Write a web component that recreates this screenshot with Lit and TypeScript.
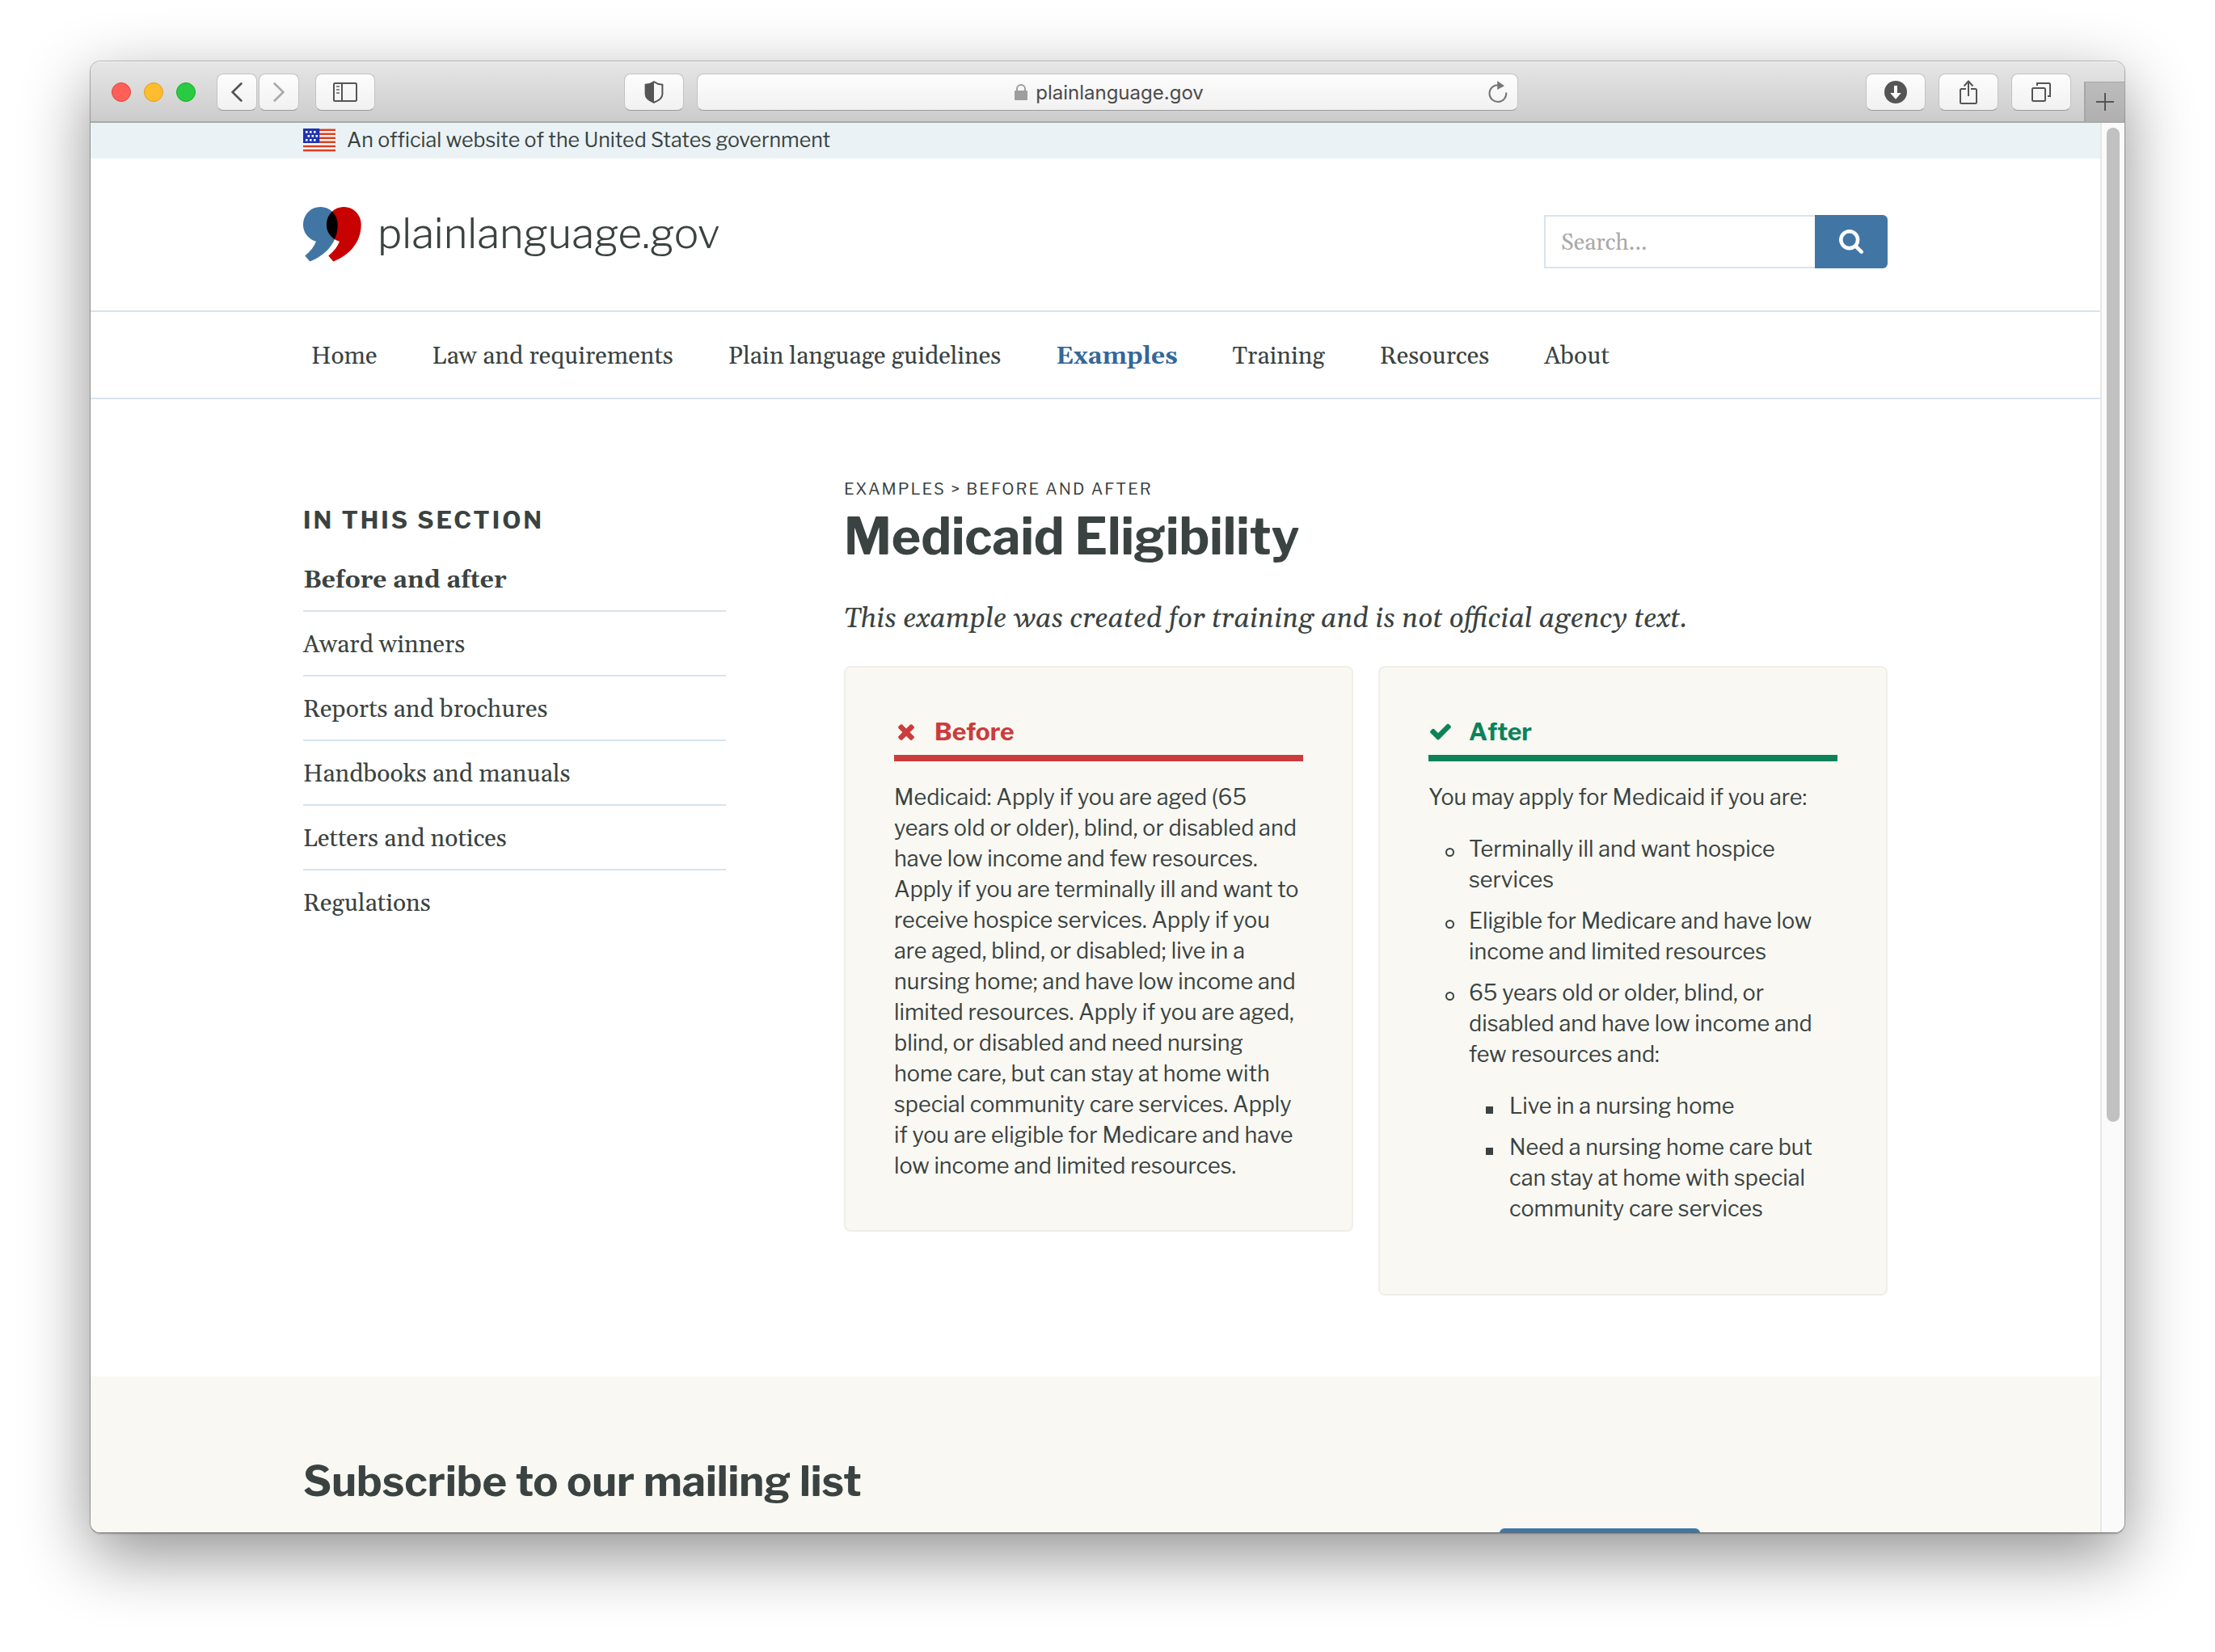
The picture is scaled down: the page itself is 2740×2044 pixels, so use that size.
import { LitElement, html, svg, css } from "lit";
import { customElement, property } from "lit/decorators.js";

const reset = css`
  :host, *, *::before, *::after { box-sizing: border-box; }
  h1, h2, p, ul { margin: 0; padding: 0; }
  ul { list-style: none; }
  a { color: inherit; text-decoration: none; }
  button { font: inherit; padding: 0; margin: 0; border: 0; }
  svg { display: block; flex: none; }
`;

const searchIcon = svg`<svg width="30" height="30" viewBox="0 128 1664 1664" fill="#fff" aria-hidden="true"><path d="M1152 832q0-185-131.5-316.5t-316.5-131.5-316.5 131.5-131.5 316.5 131.5 316.5 316.5 131.5 316.5-131.5 131.5-316.5zm512 832q0 52-38 90t-90 38q-54 0-90-38l-343-342q-179 124-399 124-143 0-273.5-55.5t-225-150-150-225-55.5-273.5 55.5-273.5 150-225 225-150 273.5-55.5 273.5 55.5 225 150 150 225 55.5 273.5q0 220-124 399l343 343q37 37 37 90z"/></svg>`;

const timesIcon = svg`<svg width="30" height="30" viewBox="0 0 1792 1792" fill="currentColor" aria-hidden="true"><path d="M1490 1322q0 40-28 68l-136 136q-28 28-68 28t-68-28l-294-294-294 294q-28 28-68 28t-68-28l-136-136q-28-28-28-68t28-68l294-294-294-294q-28-28-28-68t28-68l136-136q28-28 68-28t68 28l294 294 294-294q28-28 68-28t68 28l136 136q28 28 28 68t-28 68l-294 294 294 294q28 28 28 68z"/></svg>`;

const checkIcon = svg`<svg width="30" height="30" viewBox="0 0 1792 1792" fill="currentColor" aria-hidden="true"><path d="M1671 566q0 40-28 68l-724 724-136 136q-28 28-68 28t-68-28l-136-136-362-362q-28-28-28-68t28-68l136-136q28-28 68-28t68 28l294 295 656-657q28-28 68-28t68 28l136 136q28 28 28 68z"/></svg>`;

const comma = "M21.3 0A21.3 21.3 0 0 1 42.7 21.3C43 43 29 59.5 8.3 67.6L2.3 60.4C9 55 13.5 49 16 42.7A21.3 21.3 0 0 1 0 21.3A21.3 21.3 0 0 1 21.3 0Z";

const logoMark = svg`<svg width="72" height="68" viewBox="0 0 72 68" aria-hidden="true">
  <clipPath id="first"><path d="${comma}"/></clipPath>
  <path fill="#4176a4" d="${comma}"/>
  <path fill="#c70000" transform="translate(29 0)" d="${comma}"/>
  <g clip-path="url(#first)"><path transform="translate(29 0)" d="${comma}"/></g>
</svg>`;

const stars = [[3, 3], [8, 3], [13, 3], [5.5, 8], [10.5, 8], [15.5, 8], [3, 13], [8, 13], [13, 13]];

const flag = svg`<svg width="40" height="29" viewBox="0 0 40 29" role="img" aria-label="U.S. flag">
  <rect width="40" height="29" fill="#fff"/>
  ${[0.5, 5.5, 10.5, 15.5, 20.7, 25.8].map((y) => svg`<rect y="${y}" width="40" height="2.6" fill="#dc3f21"/>`)}
  <rect width="20.3" height="18" fill="#1e33b1"/>
  ${stars.map(([x, y]) => svg`<rect x="${x}" y="${y}" width="2.6" height="2.6" fill="#fff"/>`)}
</svg>`;

@customElement("browser-toolbar")
export class BrowserToolbar extends LitElement {
  static styles = [reset, css`
    :host {
      display: grid;
      grid-template-columns: 660fr 1106fr 750fr;
      align-items: center;
      height: 76px;
      flex: none;
      border-top: 1px solid #f6f6f6;
      border-bottom: 2px solid #a9a9a9;
      background: linear-gradient(#e6e6e6, #cccccc);
      font-family: Inter, "Liberation Sans", sans-serif;
      font-weight: 400;
    }
    .group { display: flex; align-items: center; gap: 16px; }
    .left { padding-left: 26px; gap: 20px; }
    .lights { display: flex; gap: 16px; padding-right: 6px; }
    .light { width: 24px; height: 24px; border-radius: 50%; border: 1px solid #e0443e; background: #ff5f57; }
    .light.min { border-color: #dea123; background: #febc2e; }
    .light.max { border-color: #14ae28; background: #28cb41; }
    .pair { display: flex; gap: 2px; }
    .btn, .address {
      display: flex;
      align-items: center;
      justify-content: center;
      height: 46px;
      border: 1px solid #c2c2c2;
      border-bottom-color: #9c9c9c;
      border-radius: 8px;
      background: linear-gradient(#fdfdfd, #f1f1f1);
    }
    .btn { width: 74px; }
    .btn.slim { width: 50px; }
    .address { flex: 1; padding-right: 12px; }
    .url { flex: 1; display: flex; justify-content: center; align-items: center; gap: 10px; padding-left: 40px; font-size: 24px; line-height: 30px; color: #4b4b4b; }
    .url span { padding-top: 2px; }
    .reload { background: none; }
    .right { justify-content: flex-end; height: 100%; }
    .tab {
      display: flex;
      align-items: center;
      justify-content: center;
      align-self: flex-end;
      width: 50px;
      height: 49px;
      border-top: 1px solid #a6a6a6;
      border-left: 2px solid #a6a6a6;
      background: linear-gradient(#bcbcbc, #b0b0b0);
    }
  `];

  render() {
    return html`
      <div class="group left">
        <div class="lights">
          <button class="light" aria-label="Close"></button>
          <button class="light min" aria-label="Minimize"></button>
          <button class="light max" aria-label="Zoom"></button>
        </div>
        <div class="pair">
          <button class="btn slim" aria-label="Back"><svg width="14" height="24" viewBox="0 0 14 24" fill="none" stroke="#555" stroke-width="2.7" stroke-linecap="round"><path d="M12.3 1.5 1.6 12 12.3 22.5"/></svg></button>
          <button class="btn slim" aria-label="Forward"><svg width="14" height="24" viewBox="0 0 14 24" fill="none" stroke="#aaa" stroke-width="2.7" stroke-linecap="round"><path d="M1.7 1.5 12.4 12 1.7 22.5"/></svg></button>
        </div>
        <button class="btn" aria-label="Sidebar"><svg width="30" height="24" viewBox="0 0 30 24" fill="none" stroke="#555" stroke-width="2"><rect x="1" y="1" width="28" height="22" rx="1.5"/><path d="M11 1v22"/><path stroke="#888" d="M4 5h4M4 9h4M4 13h4"/></svg></button>
      </div>
      <div class="group">
        <button class="btn" aria-label="Privacy report"><svg width="24" height="28" viewBox="0 0 24 28"><path d="M12 1.2C9 3.4 5.5 4.4 1.6 4.8V16.5C1.6 21.5 6 24.4 12 26.8C18 24.4 22.4 21.5 22.4 16.5V4.8C18.5 4.4 15 3.4 12 1.2Z" fill="none" stroke="#555" stroke-width="2"/><path d="M12 1.2C9 3.4 5.5 4.4 1.6 4.8V16.5C1.6 21.5 6 24.4 12 26.8Z" fill="#555"/></svg></button>
        <div class="address">
          <div class="url">
            <svg width="16" height="20" viewBox="0 0 16 20"><rect y="8" width="16" height="12" rx="1" fill="#9e9e9e"/><path d="M3 9V6a5 5 0 0 1 10 0v3" fill="none" stroke="#9e9e9e" stroke-width="2"/></svg>
            <span>plainlanguage.gov</span>
          </div>
          <button class="reload" aria-label="Reload"><svg width="24" height="28" viewBox="0 0 24 28"><path d="M12 5.2A10.4 10.4 0 1 0 22.2 14.5" fill="none" stroke="#777" stroke-width="2"/><path d="M11.2 0 20 6.2 11.2 11Z" fill="#777"/></svg></button>
        </div>
      </div>
      <div class="group right">
        <button class="btn" aria-label="Downloads"><svg width="28" height="28" viewBox="0 0 28 28"><circle cx="14" cy="14" r="14" fill="#555"/><path d="M12 6h4v9h4.8L14 22.8 7.2 15H12Z" fill="#fff"/></svg></button>
        <button class="btn" aria-label="Share"><svg width="22" height="30" viewBox="0 0 22 30" fill="none" stroke="#555" stroke-width="2"><path d="M8 11H2.5Q1 11 1 12.5V27.5Q1 29 2.5 29H19.5Q21 29 21 27.5V12.5Q21 11 19.5 11H14"/><path d="M11 20V1.5M5.5 7.5 11 1.5 16.5 7.5"/></svg></button>
        <button class="btn" aria-label="Tabs"><svg width="24" height="24" viewBox="0 0 24 24" fill="none" stroke="#555" stroke-width="2"><rect x="1" y="7" width="16" height="16" rx="1.5"/><path d="M7 4V1H21.5Q23 1 23 2.5V17H20"/></svg></button>
        <button class="tab" aria-label="New tab"><svg width="22" height="22" viewBox="0 0 22 22" stroke="#555" stroke-width="2"><path d="M11 0v22M0 11h22"/></svg></button>
      </div>`;
  }
}

@customElement("example-card")
export class ExampleCard extends LitElement {
  @property() kind = "before";
  @property() heading = "";

  static styles = [reset, css`
    :host { display: block; }
    .card {
      border: 2px solid #f0eee9;
      border-radius: 8px;
      background: #f9f8f3;
      padding: 60px;
      font-size: 27px;
      line-height: 38px;
    }
    .title {
      display: flex;
      align-items: center;
      gap: 20px;
      padding-bottom: 10px;
      margin-bottom: 26px;
      border-bottom: 8px solid currentColor;
      font-size: 30px;
      line-height: 38px;
      font-weight: 700;
    }
    .before { color: #cc3c3c; }
    .after { color: #0d8259; }
  `];

  render() {
    return html`<section class="card">
      <h2 class="title ${this.kind}">${this.kind === "before" ? timesIcon : checkIcon}${this.heading}</h2>
      <slot></slot>
    </section>`;
  }
}

const navItems = ["Home", "Law and requirements", "Plain language guidelines", "Examples", "Training", "Resources", "About"];
const sectionItems = ["Before and after", "Award winners", "Reports and brochures", "Handbooks and manuals", "Letters and notices", "Regulations"];

@customElement("app-root")
export class AppRoot extends LitElement {
  static styles = [reset, css`
    :host {
      --ink: #3a4341;
      --line: #d6e4ed;
      --serif: Gelasio, Georgia, "Liberation Serif", serif;
      --sans: "Libre Franklin", "Public Sans", "Open Sans", sans-serif;
      display: block;
      height: 100vh;
      padding: 76px 112px 148px;
      overflow: hidden;
      background: #fff;
      color: var(--ink);
      font-family: var(--sans);
      font-weight: 450;
    }
    .window {
      display: flex;
      flex-direction: column;
      height: 100%;
      overflow: hidden;
      border-radius: 12px;
      background: #fff;
      box-shadow: 0 0 0 1px rgba(0, 0, 0, 0.24), 0 2px 2px rgba(0, 0, 0, 0.2), 0 28px 84px rgba(0, 0, 0, 0.44);
    }
    .view { display: flex; flex: 1; min-height: 0; }
    .page { flex: 1; min-width: 0; overflow: hidden; }
    .track { width: 30px; flex: none; border-left: 2px solid #e7e7e7; background: #fafafa; padding: 6px; }
    .thumb { width: 16px; height: 71%; border-radius: 8px; background: #c1c1c1; }
    .wrap { width: 79%; max-width: 1960px; margin: 0 auto; }

    .banner { background: #eaf2f5; padding-bottom: 1px; font-size: 25px; line-height: 43px; }
    .banner .wrap { display: flex; align-items: center; gap: 14px; }

    .header { display: flex; align-items: center; justify-content: space-between; height: 188px; }
    .brand { display: flex; align-items: center; gap: 20px; font-size: 51px; line-height: 60px; font-weight: 350; }
    .brand span { padding-bottom: 2px; }
    .search { display: flex; margin-top: 18px; }
    .search input {
      width: 335px;
      height: 66px;
      padding: 3px 19px 0;
      border: 2px solid var(--line);
      border-right: 0;
      border-radius: 0;
      background: #fff;
      color: var(--ink);
      font-family: var(--serif);
      font-size: 28px;
    }
    .search input::placeholder { color: #a9a9a9; opacity: 1; }
    .search button {
      display: flex;
      align-items: center;
      justify-content: center;
      width: 90px;
      background: #4176a4;
      border-radius: 0 6px 6px 0;
    }

    .nav { border-top: 2px solid var(--line); border-bottom: 2px solid var(--line); font-family: var(--serif); font-size: 30px; line-height: 40px; }
    .nav ul { display: flex; align-items: center; gap: 68px; height: 106px; padding: 3px 0 0 10px; }
    .nav .on { font-weight: 700; color: #34679a; }

    .columns { display: grid; grid-template-columns: 523fr 1291fr; column-gap: 146px; padding-top: 99px; padding-bottom: 100px; }
    .aside { padding-top: 32px; }
    .aside h2 { font-size: 30px; line-height: 36px; letter-spacing: 3px; margin-bottom: 16px; text-transform: uppercase; }
    .aside li { padding: 22px 0 18px; border-bottom: 2px solid var(--line); font-family: var(--serif); font-size: 30px; line-height: 38px; }
    .aside li:first-child { font-weight: 700; }
    .aside li:last-child { border-bottom: 0; }

    .crumbs { font-size: 20px; line-height: 24px; letter-spacing: 2px; text-transform: uppercase; margin-bottom: 13px; }
    h1 { font-size: 62px; line-height: 68px; margin-bottom: 43px; }
    .lead { font-family: var(--serif); font-style: italic; font-size: 34px; line-height: 50px; margin-bottom: 33px; }
    .cards { display: grid; grid-template-columns: 1fr 1fr; align-items: start; gap: 31px; }

    .list { display: grid; gap: 13px; margin: 26px 0; padding-left: 21px; }
    .list .list { margin: 26px 0 0; }
    .list li { display: grid; grid-template-columns: 29px 1fr; }
    .list li::before { content: ""; width: 11px; height: 11px; margin-top: 17px; border: 2px solid var(--ink); border-radius: 50%; }
    .list .list li::before { width: 9px; height: 9px; margin-top: 19px; border-radius: 0; background: var(--ink); }

    .subscribe { background: #f9f8f3; padding-top: 100px; padding-bottom: 100px; }
    .subscribe h2 { font-size: 52px; line-height: 60px; margin-bottom: 28px; }
    .form { display: grid; grid-template-columns: 1480fr 248fr 232fr; }
    .form button { grid-column: 2; height: 72px; border-radius: 6px; background: #4176a4; }
  `];

  render() {
    return html`<div class="window">
      <browser-toolbar></browser-toolbar>
      <div class="view">
        <div class="page">
          <div class="banner"><div class="wrap">${flag}<span>An official website of the United States government</span></div></div>
          <header class="wrap header">
            <a class="brand" href="#">${logoMark}<span>plainlanguage.gov</span></a>
            <form class="search" role="search">
              <input type="search" aria-label="Search" placeholder="Search...">
              <button type="button" aria-label="Search">${searchIcon}</button>
            </form>
          </header>
          <nav class="nav"><ul class="wrap">
            ${navItems.map((t) => html`<li><a class=${t === "Examples" ? "on" : ""} href="#">${t}</a></li>`)}
          </ul></nav>
          <div class="wrap columns">
            <aside class="aside">
              <h2>In this section</h2>
              <ul>${sectionItems.map((t) => html`<li><a href="#">${t}</a></li>`)}</ul>
            </aside>
            <main>
              <p class="crumbs"><a href="#">Examples</a> &gt; <a href="#">Before and after</a></p>
              <h1>Medicaid Eligibility</h1>
              <p class="lead">This example was created for training and is not official agency text.</p>
              <div class="cards">
                <example-card kind="before" heading="Before">
                  <p>Medicaid: Apply if you are aged (65 years old or older), blind, or disabled and have low income and few resources. Apply if you are terminally ill and want to receive hospice services. Apply if you are aged, blind, or disabled; live in a nursing home; and have low income and limited resources. Apply if you are aged, blind, or disabled and need nursing home care, but can stay at home with special community care services. Apply if you are eligible for Medicare and have low income and limited resources.</p>
                </example-card>
                <example-card kind="after" heading="After">
                  <p>You may apply for Medicaid if you are:</p>
                  <ul class="list">
                    <li><span>Terminally ill and want hospice services</span></li>
                    <li><span>Eligible for Medicare and have low income and limited resources</span></li>
                    <li><div>65 years old or older, blind, or disabled and have low income and few resources and:
                      <ul class="list">
                        <li><span>Live in a nursing home</span></li>
                        <li><span>Need a nursing home care but can stay at home with special community care services</span></li>
                      </ul></div></li>
                  </ul>
                </example-card>
              </div>
            </main>
          </div>
          <section class="subscribe"><div class="wrap">
            <h2>Subscribe to our mailing list</h2>
            <form class="form"><button type="button" aria-label="Subscribe"></button></form>
          </div></section>
        </div>
        <div class="track"><div class="thumb"></div></div>
      </div>
    </div>`;
  }
}
